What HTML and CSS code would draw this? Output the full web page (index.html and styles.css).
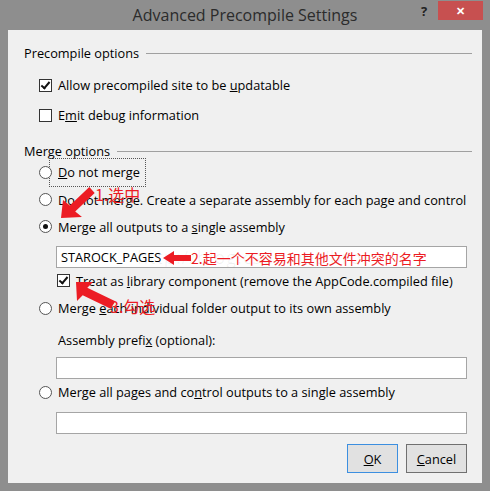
FILE: index.html
```html
<!DOCTYPE html>
<html lang="en">
<head>
    <meta charset="UTF-8">
    <title>Advanced Precompile Settings</title>
    <link rel="stylesheet" href="styles.css">
</head>
<body>

    <div id="window">
        <div id="titleBar">
            <span class="title">Advanced Precompile Settings</span>
            <span class="help">?</span>
            <span class="close">&#x2715;</span>
        </div>

        <div id="client">
            <div class="groupHead">
                <span>Precompile options</span><i></i>
            </div>
            <div class="options">
                <div class="row chkRow"><span class="chk on"></span><span>Allow precompiled site to be <u>u</u>pdatable</span></div>
                <div class="row chkRow"><span class="chk"></span><span>E<u>m</u>it debug information</span></div>
            </div>

            <div class="groupHead second">
                <span>Merge options</span><i></i>
            </div>
            <div class="options">
                <div class="row radRow"><span class="rad"></span><span class="focus"><u>D</u>o not merge</span></div>
                <div class="row radRow"><span class="rad"></span><span>Do not merge. Create a separate assembly for each pa<u>g</u>e and control</span></div>
                <div class="row radRow"><span class="rad on"></span><span>Merge all outputs to a <u>s</u>ingle assembly</span></div>
                <div class="sub">
                    <div class="field first">STAROCK_PAGES<span class="mark">http://blog.csdn.net/bro</span></div>
                    <div class="row libRow"><span class="chk on"></span><span>Treat as <u>l</u>ibrary component (remove the AppCode.compiled file)</span></div>
                </div>
                <div class="row radRow each"><span class="rad"></span><span>Merge <u>e</u>ach individual folder output to its own assembly</span></div>
                <div class="sub">
                    <div class="row label"><span>Assembly prefi<u>x</u> (optional):</span></div>
                    <div class="field"></div>
                </div>
                <div class="row radRow all"><span class="rad"></span><span>Merge all pages and co<u>n</u>trol outputs to a single assembly</span></div>
                <div class="sub">
                    <div class="field last"></div>
                </div>
            </div>

            <div id="buttons">
                <button class="ok"><u>O</u>K</button>
                <button class="cancel"><u>C</u>ancel</button>
            </div>

            <!-- red notes drawn over the dialog -->
            <span class="note n1">1.选中</span>
            <span class="note n2">2.起一个不容易和其他文件冲突的名字</span>
            <span class="note n3">3.勾选</span>
            <svg class="arrows" width="474" height="453" viewBox="0 0 474 453">
                <polygon fill="#ec1c24" points="53,188 55,170 61.8,175.5 81.3,157 86.7,163 67.2,181.5 74,187"/>
                <polygon fill="#ec1c24" points="155,228 166,221 166,225 183,225 183,231 166,231 166,235"/>
                <polygon fill="#ec1c24" points="68,252 85,252 79.3,257.7 107.3,271.2 102.7,278.8 74.7,265.3 69,271"/>
            </svg>
        </div>
    </div>

</body>
</html>
```

FILE: styles.css
```css
body {
    margin: 0;
    font-family: "Open Sans", "Noto Sans", sans-serif;
    font-size: 12.75px;
    color: #000;
}

#window {
    width: 490px;
    height: 491px;
    background: #8e8e8e;
    display: flex;
    flex-direction: column;
}

#titleBar {
    height: 30px;
    position: relative;
    text-align: center;
    line-height: 30px;
}

#titleBar .title {
    font-size: 16px;
    color: #2b2b2b;
}

#titleBar .help {
    position: absolute;
    left: 421px;
    top: -4px;
    font-weight: bold;
    font-size: 13px;
    color: #222;
}

#titleBar .close {
    position: absolute;
    left: 438px;
    top: 1px;
    width: 45px;
    height: 19px;
    line-height: 19px;
    background: #c75050;
    color: #fff;
    font-size: 11px;
    font-weight: bold;
}

#client {
    position: relative;
    margin: 0 8px;
    height: 453px;
    background: #f0f0f0;
    padding: 0 15px 0 16px;
    box-sizing: border-box;
}

.groupHead {
    display: flex;
    align-items: center;
    height: 16px;
    padding-top: 15px;
    margin-right: -5px;
}

.groupHead.second {
    padding-top: 13px;
}

.groupHead i {
    flex: 1;
    height: 1px;
    background: #a0a0a0;
    margin-left: 7px;
}

.options {
    padding-left: 15px;
}

.options > .row:first-child.chkRow {
    margin-top: 9px;
}

.row {
    display: flex;
    align-items: center;
    white-space: nowrap;
}

.chkRow {
    height: 30px;
}

.radRow {
    height: 27px;
}

.chk {
    flex: none;
    width: 11px;
    height: 11px;
    border: 1px solid #333;
    background: #fff;
    margin-right: 6px;
    position: relative;
}

.chk.on::after {
    content: "";
    position: absolute;
    left: 3px;
    top: 0px;
    width: 3px;
    height: 7px;
    border: solid #111;
    border-width: 0 2px 2px 0;
    transform: rotate(40deg);
}

.rad {
    flex: none;
    width: 11px;
    height: 11px;
    border: 1px solid #555;
    border-radius: 50%;
    background: #fff;
    margin-right: 6px;
    position: relative;
}

.rad.on::after {
    content: "";
    position: absolute;
    left: 3px;
    top: 3px;
    width: 5px;
    height: 5px;
    border-radius: 50%;
    background: #111;
}

.focus {
    outline: 1px dotted #555;
    outline-offset: 2px;
    padding: 2px 3px 3px 0;
    margin-left: -6px;
    padding-left: 6px;
}

.sub {
    padding-left: 17px;
}

.field {
    height: 20px;
    border: 1px solid #a5a5a5;
    background: #fff;
    padding-left: 4px;
    line-height: 20px;
    position: relative;
    overflow: hidden;
}

.field.first {
    margin-top: 6px;
}

.field.last {
    margin-top: 7px;
}

.field .mark {
    position: absolute;
    left: 80px;
    top: 0;
    font-size: 18px;
    color: rgba(0, 0, 0, 0.06);
    letter-spacing: 1px;
}

.libRow {
    height: 25px;
}

.libRow .chk {
    margin-left: 1px;
}

.each {
    height: 30px;
}

.label {
    height: 28px;
    padding-left: 2px;
    margin-top: 3px;
}

.sub .label + .field {
    margin-top: 3px;
}

.all {
    height: 26px;
}

#buttons {
    display: flex;
    justify-content: flex-end;
    gap: 8px;
    margin-top: 10px;
}

#buttons button {
    height: 29px;
    background: #e1e1e1;
    border: 1px solid #707070;
    font-family: inherit;
    font-size: 12.75px;
    padding: 0;
}

#buttons .ok {
    width: 51px;
    border-color: #3c8fe0;
}

#buttons .cancel {
    width: 61px;
}

.note {
    position: absolute;
    color: #ec1c24;
    font-family: "Noto Sans CJK SC", sans-serif;
    white-space: nowrap;
}

.n1 {
    left: 87px;
    top: 152px;
    font-size: 16px;
}

.n2 {
    left: 183px;
    top: 218px;
    font-size: 14px;
}

.n3 {
    left: 102px;
    top: 264px;
    font-size: 16px;
}

.arrows {
    position: absolute;
    left: 0;
    top: 0;
    pointer-events: none;
}
```
